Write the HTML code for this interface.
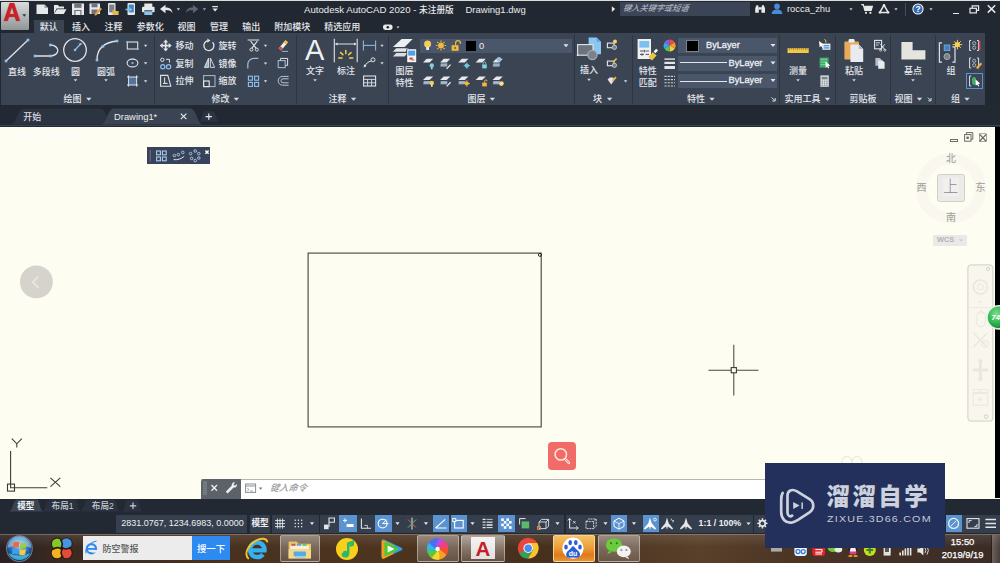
<!DOCTYPE html>
<html lang="zh-CN"><head><meta charset="utf-8"><title>Autodesk AutoCAD 2020 - Drawing1.dwg</title>
<style>
html,body{margin:0;padding:0;background:#222831;}
body{width:1000px;height:563px;overflow:hidden;position:relative;font-family:"Liberation Sans","Noto Sans CJK SC",sans-serif;}
#app{position:absolute;left:0;top:0;width:1000px;height:563px;overflow:hidden;background:#fefdf2;}
.r{position:absolute;box-sizing:border-box;}
.t{position:absolute;white-space:nowrap;line-height:1;font-family:"Liberation Sans","Noto Sans CJK SC",sans-serif;font-weight:500;}
svg.ov{position:absolute;left:0;top:0;}
svg text{font-family:"Liberation Sans","Noto Sans CJK SC",sans-serif;}
</style></head><body>
<div id="app">
<div class="r" style="left:0px;top:0px;width:1000px;height:33px;background:#222831;"></div>
<div class="r" style="left:0px;top:0px;width:1000px;height:1px;background:#dcdcd8;"></div>
<div class="r" style="left:1px;top:2px;width:28px;height:28px;background:linear-gradient(180deg,#d9dcdc 0%,#b9bdbd 45%,#8f9494 100%);border-radius:1px;"></div>
<div class="t" style="left:11.8px;top:13px;font-size:25.5px;color:#cf1f29;transform:translate(-50%,-50%);font-weight:bold;transform:translate(-50%,-50%) scaleX(0.92);text-shadow:0 0 1px #8d1218;">A</div>
<div class="t" style="left:304px;top:9.5px;font-size:9.65px;color:#e9ebee;transform:translate(0,-50%);">Autodesk AutoCAD 2020 - <span style="font-size:8.7px">未注册版</span></div>
<div class="t" style="left:465.5px;top:9.5px;font-size:9.5px;color:#e9ebee;transform:translate(0,-50%);">Drawing1.dwg</div>
<div class="r" style="left:620px;top:1.5px;width:130px;height:14.5px;background:#3b4557;"></div>
<div class="t" style="left:622.5px;top:9px;font-size:8.2px;color:#aeb4bf;transform:translate(0,-50%);font-style:italic;transform:translate(0,-50%) skewX(-10deg);">键入关键字或短语</div>
<div class="t" style="left:787px;top:9.3px;font-size:9.4px;color:#e9ebee;transform:translate(0,-50%);">rocca_zhu</div>
<div class="r" style="left:905.3px;top:3px;width:1px;height:13px;background:#454d5a;"></div>
<div class="r" style="left:952.5px;top:12.6px;width:6px;height:1.5px;background:#e6e8ea;"></div>
<div class="r" style="left:34px;top:20px;width:30px;height:13px;background:#3b4453;"></div>
<div class="t" style="left:48.7px;top:27px;font-size:9px;color:#e4e7ec;transform:translate(-50%,-50%);">默认</div>
<div class="t" style="left:81px;top:27px;font-size:9px;color:#e4e7ec;transform:translate(-50%,-50%);">插入</div>
<div class="t" style="left:113.4px;top:27px;font-size:9px;color:#e4e7ec;transform:translate(-50%,-50%);">注释</div>
<div class="t" style="left:150.3px;top:27px;font-size:9px;color:#e4e7ec;transform:translate(-50%,-50%);">参数化</div>
<div class="t" style="left:186.6px;top:27px;font-size:9px;color:#e4e7ec;transform:translate(-50%,-50%);">视图</div>
<div class="t" style="left:219px;top:27px;font-size:9px;color:#e4e7ec;transform:translate(-50%,-50%);">管理</div>
<div class="t" style="left:251.3px;top:27px;font-size:9px;color:#e4e7ec;transform:translate(-50%,-50%);">输出</div>
<div class="t" style="left:292.2px;top:27px;font-size:9px;color:#e4e7ec;transform:translate(-50%,-50%);">附加模块</div>
<div class="t" style="left:342.2px;top:27px;font-size:9px;color:#e4e7ec;transform:translate(-50%,-50%);">精选应用</div>
<div class="r" style="left:0px;top:33px;width:1000px;height:72px;background:#222831;"></div>
<div class="r" style="left:1px;top:33px;width:984px;height:72px;background:#3b4453;"></div>
<div class="r" style="left:154.0px;top:35px;width:1.2px;height:69px;background:#2d3541;"></div>
<div class="r" style="left:296.0px;top:35px;width:1.2px;height:69px;background:#2d3541;"></div>
<div class="r" style="left:387.5px;top:35px;width:1.2px;height:69px;background:#2d3541;"></div>
<div class="r" style="left:573.9px;top:35px;width:1.2px;height:69px;background:#2d3541;"></div>
<div class="r" style="left:631.5px;top:35px;width:1.2px;height:69px;background:#2d3541;"></div>
<div class="r" style="left:778.8px;top:35px;width:1.2px;height:69px;background:#2d3541;"></div>
<div class="r" style="left:835.0px;top:35px;width:1.2px;height:69px;background:#2d3541;"></div>
<div class="r" style="left:890.0px;top:35px;width:1.2px;height:69px;background:#2d3541;"></div>
<div class="r" style="left:934.5px;top:35px;width:1.2px;height:69px;background:#2d3541;"></div>
<div class="t" style="left:17px;top:71.6px;font-size:9px;color:#e4e7ec;transform:translate(-50%,-50%);">直线</div>
<div class="t" style="left:46.3px;top:71.6px;font-size:9px;color:#e4e7ec;transform:translate(-50%,-50%);">多段线</div>
<div class="t" style="left:75.5px;top:71.6px;font-size:9px;color:#e4e7ec;transform:translate(-50%,-50%);">圆</div>
<div class="t" style="left:106px;top:71.6px;font-size:9px;color:#e4e7ec;transform:translate(-50%,-50%);">圆弧</div>
<div class="t" style="left:72.4px;top:99px;font-size:9px;color:#e4e7ec;transform:translate(-50%,-50%);">绘图</div>
<div class="t" style="left:175.4px;top:45.5px;font-size:9px;color:#e4e7ec;transform:translate(0,-50%);">移动</div>
<div class="t" style="left:175.4px;top:63.5px;font-size:9px;color:#e4e7ec;transform:translate(0,-50%);">复制</div>
<div class="t" style="left:175.4px;top:81.2px;font-size:9px;color:#e4e7ec;transform:translate(0,-50%);">拉伸</div>
<div class="t" style="left:218.6px;top:45.5px;font-size:9px;color:#e4e7ec;transform:translate(0,-50%);">旋转</div>
<div class="t" style="left:218.6px;top:63.5px;font-size:9px;color:#e4e7ec;transform:translate(0,-50%);">镜像</div>
<div class="t" style="left:218.6px;top:81.2px;font-size:9px;color:#e4e7ec;transform:translate(0,-50%);">缩放</div>
<div class="t" style="left:220.6px;top:99px;font-size:9px;color:#e4e7ec;transform:translate(-50%,-50%);">修改</div>
<div class="t" style="left:314.7px;top:50px;font-size:29px;color:#eef0f2;transform:translate(-50%,-50%);transform:translate(-50%,-50%) scaleX(1.0);">A</div>
<div class="t" style="left:315px;top:71.2px;font-size:9px;color:#e4e7ec;transform:translate(-50%,-50%);">文字</div>
<div class="t" style="left:346px;top:71.2px;font-size:9px;color:#e4e7ec;transform:translate(-50%,-50%);">标注</div>
<div class="t" style="left:337.6px;top:99px;font-size:9px;color:#e4e7ec;transform:translate(-50%,-50%);">注释</div>
<div class="t" style="left:404.4px;top:71.3px;font-size:9px;color:#e4e7ec;transform:translate(-50%,-50%);">图层</div>
<div class="t" style="left:404.4px;top:83.4px;font-size:9px;color:#e4e7ec;transform:translate(-50%,-50%);">特性</div>
<div class="r" style="left:420px;top:38.6px;width:152px;height:14.2px;background:#4a566a;"></div>
<div class="r" style="left:465.5px;top:41.3px;width:10.2px;height:9.6px;background:#000;"></div>
<div class="t" style="left:481.7px;top:45.7px;font-size:9.4px;color:#e9ebee;transform:translate(-50%,-50%);">0</div>
<div class="t" style="left:476.4px;top:99px;font-size:9px;color:#e4e7ec;transform:translate(-50%,-50%);">图层</div>
<div class="t" style="left:589px;top:70.4px;font-size:9px;color:#e4e7ec;transform:translate(-50%,-50%);">插入</div>
<div class="t" style="left:597.6px;top:99px;font-size:9px;color:#e4e7ec;transform:translate(-50%,-50%);">块</div>
<div class="t" style="left:647.7px;top:70.8px;font-size:9px;color:#e4e7ec;transform:translate(-50%,-50%);">特性</div>
<div class="t" style="left:647.7px;top:82.8px;font-size:9px;color:#e4e7ec;transform:translate(-50%,-50%);">匹配</div>
<div class="r" style="left:678px;top:38px;width:98.6px;height:15.2px;background:#4a566a;"></div>
<div class="r" style="left:678px;top:56.4px;width:98.6px;height:14.4px;background:#4a566a;"></div>
<div class="r" style="left:678px;top:73.5px;width:98.6px;height:14.5px;background:#4a566a;"></div>
<div class="r" style="left:686.2px;top:39.8px;width:12.6px;height:12px;background:#000;border:1px solid #7b7f88;"></div>
<div class="t" style="left:706px;top:46.2px;font-size:9.2px;color:#eef0f2;transform:translate(0,-50%);-webkit-text-stroke:.3px #eef0f2;">ByLayer</div>
<div class="r" style="left:680px;top:62.1px;width:46.6px;height:1.1px;background:#e3e5e8;"></div>
<div class="t" style="left:728.6px;top:63.8px;font-size:9.2px;color:#eef0f2;transform:translate(0,-50%);-webkit-text-stroke:.3px #eef0f2;">ByLayer</div>
<div class="r" style="left:680px;top:80.5px;width:46.6px;height:1.1px;background:#e3e5e8;"></div>
<div class="t" style="left:728.6px;top:81.4px;font-size:9.2px;color:#eef0f2;transform:translate(0,-50%);-webkit-text-stroke:.3px #eef0f2;">ByLayer</div>
<div class="t" style="left:696px;top:99px;font-size:9px;color:#e4e7ec;transform:translate(-50%,-50%);">特性</div>
<div class="t" style="left:798px;top:71px;font-size:9px;color:#e4e7ec;transform:translate(-50%,-50%);">测量</div>
<div class="t" style="left:802.4px;top:99px;font-size:9px;color:#e4e7ec;transform:translate(-50%,-50%);">实用工具</div>
<div class="t" style="left:854px;top:71px;font-size:9px;color:#e4e7ec;transform:translate(-50%,-50%);">粘贴</div>
<div class="t" style="left:863px;top:99px;font-size:9px;color:#e4e7ec;transform:translate(-50%,-50%);">剪贴板</div>
<div class="t" style="left:913px;top:71px;font-size:9px;color:#e4e7ec;transform:translate(-50%,-50%);">基点</div>
<div class="t" style="left:903.4px;top:99px;font-size:9px;color:#e4e7ec;transform:translate(-50%,-50%);">视图</div>
<div class="t" style="left:951px;top:71px;font-size:9px;color:#e4e7ec;transform:translate(-50%,-50%);">组</div>
<div class="r" style="left:965.6px;top:72.6px;width:17.4px;height:16.4px;background:transparent;border:1px solid #5b93d1;"></div>
<div class="t" style="left:955.5px;top:99px;font-size:9px;color:#e4e7ec;transform:translate(-50%,-50%);">组</div>
<div class="r" style="left:0px;top:105px;width:1000px;height:21.5px;background:#222933;"></div>
<svg class="ov" width="1000" height="563" viewBox="0 0 1000 563"><path d="M11 124.4C17 124 17 109 24 108.6H100C107 109 107 124 113 124.4z" fill="#2d3441"/></svg>
<svg class="ov" width="1000" height="563" viewBox="0 0 1000 563"><path d="M101 124.4C107 124 107 108.6 114 108.4H190C197 108.6 197 124 203 124.4z" fill="#3b4453"/></svg>
<svg class="ov" width="1000" height="563" viewBox="0 0 1000 563"><path d="M199.5 121.5C202 121 202 111.5 205 111.2H212C216 111.5 217.5 121 217.5 121.5z" fill="#2d3441"/></svg>
<div class="t" style="left:32.2px;top:116.8px;font-size:9px;color:#d9dde3;transform:translate(-50%,-50%);">开始</div>
<div class="t" style="left:114px;top:116.6px;font-size:9.4px;color:#eceef1;transform:translate(0,-50%);">Drawing1*</div>
<div class="r" style="left:0px;top:124.7px;width:1000px;height:1.1px;background:#3b4453;"></div>
<div class="r" style="left:0px;top:127.3px;width:995.2px;height:371.2px;background:#fefdf2;"></div>
<div class="r" style="left:995.2px;top:127.3px;width:4.8px;height:371.2px;background:#000;"></div>
<div class="t" style="left:8px;top:136.2px;font-size:8.6px;color:#ffffff;transform:translate(0,-50%);opacity:.85;">[-][俯视][二维线框]</div>
<div class="r" style="left:146.8px;top:147.2px;width:62.8px;height:17.2px;background:#384359;"></div>
<div class="r" style="left:548.3px;top:442px;width:27.7px;height:27.6px;background:#f16b69;border-radius:4px;"></div>
<div class="r" style="left:949.6px;top:138.6px;width:8.4px;height:3px;background:transparent;border:1px solid #6a6a66;"></div>
<svg class="ov" width="1000" height="563" viewBox="0 0 1000 563"><circle cx="951" cy="188.4" r="29.5" fill="none" stroke="#faf8ee" stroke-width="11"/></svg>
<div class="t" style="left:951px;top:159.3px;font-size:10px;color:#a9a9a4;transform:translate(-50%,-50%);">北</div>
<div class="t" style="left:951px;top:218px;font-size:10px;color:#a9a9a4;transform:translate(-50%,-50%);">南</div>
<div class="t" style="left:921.6px;top:188.3px;font-size:10px;color:#a9a9a4;transform:translate(-50%,-50%);">西</div>
<div class="t" style="left:980.6px;top:188.3px;font-size:10px;color:#a9a9a4;transform:translate(-50%,-50%);">东</div>
<div class="r" style="left:936.8px;top:174.2px;width:28px;height:27.8px;background:#ecebe8;border:1.2px solid #d3cfc4;border-radius:2.5px;"></div>
<div class="r" style="left:942.6px;top:178.4px;width:16.6px;height:18px;background:#f1f0ee;"></div>
<div class="t" style="left:950.8px;top:187.2px;font-size:15.4px;color:#8d8d90;transform:translate(-50%,-50%);font-weight:300;">上</div>
<div class="r" style="left:933.4px;top:234.8px;width:33.6px;height:10.8px;background:#eae9e5;border-radius:1px;"></div>
<div class="t" style="left:945.6px;top:240.3px;font-size:7.4px;color:#b4b4b8;transform:translate(-50%,-50%);font-weight:bold;">WCS</div>
<div class="r" style="left:201px;top:479px;width:564.6px;height:19.5px;background:#ffffff;border-top:1px solid #b5b5b2;"></div>
<div class="r" style="left:201px;top:479px;width:40.2px;height:19.5px;background:#5d6168;border-radius:3px 0 0 0;"></div>
<div class="t" style="left:270.4px;top:488.6px;font-size:9.2px;color:#9a9a9a;transform:translate(0,-50%);font-style:italic;transform:translate(0,-50%) skewX(-10deg);">键入命令</div>
<div class="r" style="left:0px;top:498.5px;width:1000px;height:16.5px;background:#222933;"></div>
<svg class="ov" width="1000" height="563" viewBox="0 0 1000 563"><path d="M9 511.400C13 511 13 499.800 17 499.400h20c3 .400 3 11.600 6 12z" fill="#3b4453"/></svg>
<svg class="ov" width="1000" height="563" viewBox="0 0 1000 563"><path d="M42 511.400C46 511 46 499.800 50 499.400h25c3 .400 3 11.600 6 12z" fill="#2b323f"/></svg>
<svg class="ov" width="1000" height="563" viewBox="0 0 1000 563"><path d="M80 511.400C84 511 84 499.800 88 499.400h26c3 .400 3 11.600 6 12z" fill="#2b323f"/></svg>
<svg class="ov" width="1000" height="563" viewBox="0 0 1000 563"><path d="M122 511.400C125 511 125 499.800 128 499.400h9c3 .400 3 11.600 5 12z" fill="#2b323f"/></svg>
<div class="t" style="left:25.8px;top:505.8px;font-size:8.6px;color:#eef0f2;transform:translate(-50%,-50%);font-weight:bold;">模型</div>
<div class="t" style="left:62.6px;top:505.8px;font-size:8.6px;color:#c9ced6;transform:translate(-50%,-50%);">布局1</div>
<div class="t" style="left:102.8px;top:505.8px;font-size:8.6px;color:#c9ced6;transform:translate(-50%,-50%);">布局2</div>
<div class="r" style="left:0px;top:515px;width:1000px;height:18.5px;background:#222933;"></div>
<div class="r" style="left:116px;top:515px;width:131px;height:17.5px;background:#363f4e;"></div>
<div class="t" style="left:121.2px;top:523.4px;font-size:9.0px;color:#eef0f2;transform:translate(0,-50%);">2831.0767, 1234.6983, 0.0000</div>
<div class="r" style="left:249.5px;top:515px;width:20.6px;height:17.5px;background:#363f4e;"></div>
<div class="t" style="left:260px;top:523.4px;font-size:8.6px;color:#eef0f2;transform:translate(-50%,-50%);font-weight:bold;">模型</div>
<div class="r" style="left:271.6px;top:515px;width:47px;height:17.5px;background:#353e4d;"></div>
<div class="r" style="left:320px;top:515px;width:449px;height:17.5px;background:#353e4d;"></div>
<div class="r" style="left:339px;top:515.4px;width:17.5px;height:16.3px;background:#5b93d1;"></div>
<div class="r" style="left:375px;top:515.4px;width:16.5px;height:16.3px;background:#5b93d1;"></div>
<div class="r" style="left:432.5px;top:515.4px;width:16.5px;height:16.3px;background:#5b93d1;"></div>
<div class="r" style="left:450.5px;top:515.4px;width:16.0px;height:16.3px;background:#5b93d1;"></div>
<div class="r" style="left:498px;top:515.4px;width:16.5px;height:16.3px;background:#5b93d1;"></div>
<div class="r" style="left:611px;top:515.4px;width:16px;height:16.3px;background:#5b93d1;"></div>
<div class="r" style="left:642.5px;top:515.4px;width:16.5px;height:16.3px;background:#5b93d1;"></div>
<div class="t" style="left:698.6px;top:523.4px;font-size:8.8px;color:#eef0f2;transform:translate(0,-50%);font-weight:bold;">1:1 / 100%</div>
<div class="r" style="left:564.4px;top:515px;width:1.6px;height:17.5px;background:#222933;"></div>
<div class="r" style="left:752.6px;top:515px;width:1.8px;height:17.5px;background:#222933;"></div>
<div class="r" style="left:945.5px;top:515px;width:54.5px;height:17.5px;background:#353e4d;"></div>
<div class="r" style="left:945.5px;top:515.4px;width:16.5px;height:16.3px;background:#5b93d1;"></div>
<div class="r" style="left:0px;top:533.5px;width:1000px;height:29.5px;background:linear-gradient(90deg,#2a2024 0%,#3a2a20 6%,#46301f 20%,#4d341f 38%,#46301e 55%,#59402a 70%,#4a3424 80%,#3a2c26 100%);"></div>
<div class="r" style="left:0px;top:533.5px;width:1000px;height:1px;background:rgba(200,185,170,.45);"></div>
<div class="r" style="left:0px;top:534.5px;width:1000px;height:12px;background:linear-gradient(180deg,rgba(255,255,255,.10),rgba(255,255,255,0));"></div>
<div class="r" style="left:83.4px;top:536px;width:108.8px;height:24.4px;background:#ececec;"></div>
<div class="r" style="left:192px;top:536px;width:38.2px;height:24.4px;background:#2d8af1;"></div>
<div class="t" style="left:102.6px;top:548.8px;font-size:9px;color:#555;transform:translate(0,-50%);">防空警报</div>
<div class="t" style="left:211px;top:548.8px;font-size:9.4px;color:#fff;transform:translate(-50%,-50%);">搜一下</div>
<div class="r" style="left:280px;top:534.6px;width:39.60000000000002px;height:27px;background:linear-gradient(180deg,rgba(255,255,255,.36),rgba(255,255,255,.16));border:1px solid rgba(255,255,255,.38);border-radius:2px;"></div>
<div class="r" style="left:417px;top:534.6px;width:41.80000000000001px;height:27px;background:linear-gradient(180deg,rgba(255,255,255,.36),rgba(255,255,255,.16));border:1px solid rgba(255,255,255,.38);border-radius:2px;"></div>
<div class="r" style="left:461px;top:534.6px;width:43.60000000000002px;height:27px;background:linear-gradient(180deg,rgba(255,255,255,.52),rgba(255,255,255,.16));border:1px solid rgba(255,255,255,.38);border-radius:2px;"></div>
<div class="r" style="left:552.6px;top:534.6px;width:42.39999999999998px;height:27px;background:linear-gradient(180deg,rgba(255,190,80,.75),rgba(255,255,255,.16));border:1px solid rgba(255,255,255,.38);border-radius:2px;background:linear-gradient(180deg,#f3c264,#ea9c34 50%,#de7a1c 75%,#e99236);border-color:rgba(255,225,170,.8);"></div>
<div class="r" style="left:598px;top:534.6px;width:42px;height:27px;background:linear-gradient(180deg,rgba(255,255,255,.36),rgba(255,255,255,.16));border:1px solid rgba(255,255,255,.38);border-radius:2px;"></div>
<div class="r" style="left:471.2px;top:536.6px;width:23.6px;height:22.8px;background:linear-gradient(180deg,#f6f4f2,#e2e0de);"></div>
<div class="t" style="left:483px;top:548.6px;font-size:20.5px;color:#c4202a;transform:translate(-50%,-50%);font-weight:bold;">A</div>
<svg class="ov" width="1000" height="563" viewBox="0 0 1000 563"><rect x="771" y="546" width="11" height="5.600" fill="#a9a9a9"/><rect x="794.400" y="543.600" width="12.400" height="12.400" rx="2.400" fill="#eef4fb"/><circle cx="798" cy="551.600" r="2" fill="none" stroke="#2d7ae0" stroke-width="1.200"/><circle cx="803.200" cy="551.600" r="2" fill="none" stroke="#2d7ae0" stroke-width="1.200"/><rect x="812.400" y="543.600" width="12.600" height="12.400" rx="2.400" fill="#dc242c"/><path d="M815.400 549.600h6.600v2.600h-6.600M815.400 554h6.600" stroke="#fff" stroke-width="1" fill="none"/><ellipse cx="833" cy="547.600" rx="5.400" ry="4.400" fill="#6cc83a"/><ellipse cx="838.400" cy="549.600" rx="3.800" ry="3" fill="#e6efe0"/><ellipse cx="853" cy="549" rx="4.600" ry="5.800" fill="#2a2024"/><ellipse cx="853" cy="550.600" rx="3" ry="3.400" fill="#f6f6f6"/><path d="M849 551.600h8l-1.400 3h-5.200z" fill="#e03a8a"/><ellipse cx="850.400" cy="556" rx="2.200" ry="1" fill="#f0a020"/><ellipse cx="855.600" cy="556" rx="2.200" ry="1" fill="#f0a020"/><circle cx="869.800" cy="550" r="6" fill="#c8dc20"/><path d="M866.400 550h6.800M869.800 546.600v6.800" stroke="#2a8a2a" stroke-width="2"/><rect x="883.600" y="545.600" width="7" height="10" fill="#e0e0e0"/><rect x="885" y="547" width="4.200" height="5" fill="#555"/><path d="M889.600 553v-6l2.400-1.400" stroke="#f4f4f4" stroke-width="1.200" fill="none"/><path d="M900.200 555.600v-3M902.800 555.600v-5M905.400 555.600v-7M908 555.600v-9M910.600 555.600v-11" stroke="#e6e6e6" stroke-width="1.600"/><path d="M917.400 548.400h2.600l3.400-3v10.200l-3.400-3h-2.600z" fill="#e6e6e6"/><path d="M925 548q1.800 2.400 0 5M927 546.400q2.800 4 0 8.200" fill="none" stroke="#e6e6e6" stroke-width=".900"/></svg>
<div class="t" style="left:962.6px;top:542.1px;font-size:9.4px;color:#fff;transform:translate(-50%,-50%);-webkit-text-stroke:.25px #fff;">15:50</div>
<div class="t" style="left:962.6px;top:555.1px;font-size:9.4px;color:#fff;transform:translate(-50%,-50%);-webkit-text-stroke:.25px #fff;">2019/9/19</div>
<div class="r" style="left:990.5px;top:534.5px;width:9.5px;height:28.5px;background:linear-gradient(90deg,rgba(255,255,255,.25),rgba(255,255,255,.08));border-left:1px solid rgba(0,0,0,.5);"></div>
<div class="r" style="left:765.2px;top:463px;width:179.4px;height:84.9px;background:#23305b;"></div>
<div class="t" style="left:826.6px;top:498.3px;font-size:23.4px;color:#cdd1dc;transform:translate(0,-50%);font-weight:900;letter-spacing:2.500px;">溜溜自学</div>
<div class="t" style="left:826.7px;top:519px;font-size:9px;color:#c5c9d5;transform:translate(0,-50%);font-weight:400;letter-spacing:1px;transform:translate(0,-50%) scaleX(1.190);transform-origin:0 50%;">ZIXUE.3D66.COM</div>
<svg class="ov" width="1000" height="563" viewBox="0 0 1000 563">
<path d="M22.3 14.25h4l-2.0 2.5z" fill="#333"/>
<path d="M36.5 4.5h8l3.5 3.5v6h-11.5z" fill="#e6e8ea"/><path d="M44.5 4.5v3.5h3.5" fill="#9aa0a8"/>
<path d="M54 5h4l1 1.5h5v2h-7.5l-2.5 5.5z" fill="#e6e8ea"/><path d="M57 9.3h9.5l-2.7 4.7h-9.6z" fill="#e6e8ea"/>
<rect x="72" y="3.5" width="12" height="11.5" fill="#e6e8ea"/><rect x="74.3" y="3.5" width="7.2" height="4.3" fill="#6c737e"/><rect x="74.3" y="10" width="7.2" height="5" fill="#6c737e"/><rect x="75.5" y="11" width="4.8" height="4" fill="#e6e8ea"/>
<rect x="89.5" y="3.5" width="10.5" height="10.5" fill="#e6e8ea"/><rect x="91.5" y="3.5" width="6" height="3.8" fill="#6c737e"/><rect x="91.5" y="9.5" width="6" height="4.5" fill="#6c737e"/><path d="M95 13.5l5.2-6 1.8 1.6-5.2 6-2.3.6z" fill="#e8a33d"/>
<rect x="108" y="3" width="7.5" height="12" rx="1" fill="#e6e8ea"/><rect x="109.2" y="4.6" width="5.1" height="7.8" fill="#7b828c"/><path d="M112.5 10h2.5l.6 1h3v4h-6.1z" fill="#e8b64c"/>
<rect x="127.5" y="3" width="7.5" height="12" rx="1" fill="#e6e8ea"/><rect x="128.7" y="4.6" width="5.1" height="7.8" fill="#3f86c9"/><path d="M125.5 8.7h4v-1.6l2.6 2.4-2.6 2.4v-1.6h-4z" fill="#7fc0f0"/>
<rect x="144.3" y="3.5" width="8" height="3.5" fill="#e6e8ea"/><rect x="142" y="6.8" width="12.6" height="5.5" rx="1" fill="#e6e8ea"/><rect x="144.3" y="10.3" width="8" height="4.7" fill="#8fc4ee"/><rect x="144.3" y="10.3" width="8" height="1" fill="#3f4753"/>
<path d="M160 9l5.5-4.2v2.6c4 0 6.6 1.6 7 5.6-1.6-2.3-3.6-2.9-7-2.9v3.1z" fill="#e6e8ea"/>
<path d="M176.70000000000002 8.200000000000001h3.4l-1.7 2.2z" fill="#c9ccd2"/>
<path d="M198.4 9l-5.5-4.2v2.6c-4 0-6.6 1.6-7 5.6 1.6-2.3 3.6-2.9 7-2.9v3.1z" fill="#5d6572"/>
<path d="M202.70000000000002 8.200000000000001h3.4l-1.7 2.2z" fill="#9aa0a8"/>
<rect x="212.2" y="6" width="5.8" height="1.2" fill="#e6e8ea"/>
<path d="M212.4 8.5h5.4l-2.7 3z" fill="#e6e8ea"/>
<path d="M611.8 6.3l3.4 2.8-3.4 2.8z" fill="#e6e8ea"/>
<path d="M755.2 12.8v-4.6l1.2-3h1.8l.6 3v4.6zM761.4 12.8v-4.6l.6-3h1.8l1.2 3v4.6z" fill="#e6e8ea"/><rect x="758.6" y="7.2" width="3" height="2.4" fill="#e6e8ea"/>
<circle cx="777" cy="6.4" r="2.8" fill="#4a8bd9"/><path d="M771.6 14c.4-3.6 2.6-4.6 5.4-4.6s5 1 5.4 4.6z" fill="#4a8bd9"/>
<path d="M849.4 8.200000000000001h3.2l-1.6 2.2z" fill="#c9ccd2"/>
<path d="M861.3 4.6h2l1.6 5.8h6.2l1.2-4h-7.6" fill="#e6e8ea" stroke="#e6e8ea" stroke-width="1.3"/><circle cx="866" cy="12.8" r="1.1" fill="#e6e8ea"/><circle cx="870.4" cy="12.8" r="1.1" fill="#e6e8ea"/>
<path d="M884 5.2l4.2 7.2h-8.4z" fill="none" stroke="#e6e8ea" stroke-width="1.5" stroke-linejoin="round"/><circle cx="884" cy="5.2" r="1.2" fill="#e6e8ea"/><circle cx="879.8" cy="12.4" r="1.2" fill="#e6e8ea"/><circle cx="888.2" cy="12.4" r="1.2" fill="#e6e8ea"/>
<path d="M894.4 8.200000000000001h3.2l-1.6 2.2z" fill="#c9ccd2"/>
<circle cx="918" cy="9" r="5.6" fill="#fff"/><circle cx="918" cy="9" r="4.6" fill="#3467b5"/>
<text x="918" y="12.1" font-size="8.5" font-weight="bold" fill="#fff" text-anchor="middle">?</text>
<path d="M929.4 8.200000000000001h3.2l-1.6 2.2z" fill="#c9ccd2"/>
<rect x="970" y="8.3" width="6.4" height="4.6" fill="none" stroke="#e6e8ea" stroke-width="1.2"/><path d="M972.2 8v-2.2h6.4v4.6h-2" fill="none" stroke="#e6e8ea" stroke-width="1.2"/>
<path d="M987.8 5.2l7.4 7.4M995.2 5.2l-7.4 7.4" stroke="#e6e8ea" stroke-width="1.5"/>
<rect x="383" y="24.4" width="9.6" height="5.6" rx="2.4" fill="#e6e8ea"/><circle cx="387.8" cy="27.2" r="1.3" fill="#222831"/>
<path d="M396.5 26.4h3l-1.5 2z" fill="#c9ccd2"/>
<path d="M6 61L28 40" stroke="#dfe2e7" stroke-width="1.3"/>
<rect x="4.7" y="59.7" width="2.6" height="2.6" fill="#8fc0ee"/>
<rect x="26.7" y="38.7" width="2.6" height="2.6" fill="#8fc0ee"/>
<path d="M35 56H50.4A7.4 5.5 0 0 0 50.4 45" fill="none" stroke="#dfe2e7" stroke-width="1.3"/>
<rect x="33.7" y="54.7" width="2.6" height="2.6" fill="#8fc0ee"/>
<rect x="49.1" y="54.7" width="2.6" height="2.6" fill="#8fc0ee"/>
<rect x="49.1" y="43.7" width="2.6" height="2.6" fill="#8fc0ee"/>
<circle cx="75" cy="50" r="11.3" fill="none" stroke="#dfe2e7" stroke-width="1.3"/><path d="M75 50l5.5-6" stroke="#8fc0ee" stroke-width="1.2"/>
<rect x="73.9" y="48.9" width="2.2" height="2.2" fill="#8fc0ee"/>
<rect x="79.4" y="42.9" width="2.2" height="2.2" fill="#8fc0ee"/>
<path d="M97 60Q97 43 117 41" fill="none" stroke="#dfe2e7" stroke-width="1.3"/>
<rect x="95.7" y="58.7" width="2.6" height="2.6" fill="#8fc0ee"/>
<rect x="101.7" y="45.1" width="2.6" height="2.6" fill="#8fc0ee"/>
<rect x="115.7" y="39.7" width="2.6" height="2.6" fill="#8fc0ee"/>
<path d="M73.7 79.14999999999999h3.6l-1.8 2.3z" fill="#d5d9e0"/>
<path d="M104.2 79.14999999999999h3.6l-1.8 2.3z" fill="#d5d9e0"/>
<rect x="127.3" y="42" width="10.4" height="7" fill="none" stroke="#dfe2e7" stroke-width="1.1"/>
<rect x="126.39999999999999" y="41.1" width="1.8" height="1.8" fill="#8fc0ee"/>
<rect x="136.79999999999998" y="48.1" width="1.8" height="1.8" fill="#8fc0ee"/>
<ellipse cx="132.5" cy="63" rx="5.4" ry="3.9" fill="none" stroke="#dfe2e7" stroke-width="1.1"/>
<rect x="131.6" y="62.1" width="1.8" height="1.8" fill="#8fc0ee"/>
<rect x="131.7" y="58.300000000000004" width="1.6" height="1.6" fill="#8fc0ee"/>
<rect x="128.6" y="77" width="8" height="8" fill="#52739f"/><path d="M127 77h11.2M127 85h11.2M128.6 75.4v11.2M136.6 75.4v11.2" stroke="#dfe2e7" stroke-width="1"/>
<path d="M143.9 44.699999999999996h3.4l-1.7 2.2z" fill="#d5d9e0"/>
<path d="M143.9 62.199999999999996h3.4l-1.7 2.2z" fill="#d5d9e0"/>
<path d="M143.9 80.2h3.4l-1.7 2.2z" fill="#d5d9e0"/>
<path d="M86.1 97.75h5.4l-2.7 3.1z" fill="#d5d9e0"/>
<path d="M165.7 39.6l2.6 3h-1.8v2.2h2.2v-1.8l3 2.6-3 2.6v-1.8h-2.2v2.2h1.8l-2.6 3-2.6-3h1.8v-2.2h-2.2v1.8l-3-2.6 3-2.6v1.8h2.2v-2.2h-1.8z" fill="#dfe2e7"/>
<circle cx="162.3" cy="59.8" r="1.7" fill="none" stroke="#dfe2e7" stroke-width="1"/><path d="M166 59.3h3.4v3.4" fill="none" stroke="#dfe2e7" stroke-width="1"/><circle cx="162.8" cy="66.7" r="2.1" fill="none" stroke="#8fc0ee" stroke-width="1.2"/><circle cx="168.6" cy="66.7" r="2.1" fill="none" stroke="#8fc0ee" stroke-width="1.2"/>
<path d="M160.6 75.4h7.2l3 10.8h-10.2z" fill="none" stroke="#dfe2e7" stroke-width="1.1"/><path d="M164.6 77.4v5.6" stroke="#dfe2e7" stroke-width="1"/><path d="M163 83.4h4.6" stroke="#dfe2e7" stroke-width="1.1"/>
<path d="M212.6 42.2a5 5 0 1 1-4.4-1.6" fill="none" stroke="#dfe2e7" stroke-width="1.3"/><path d="M207.4 38.6l3 2-3 2.2z" fill="#dfe2e7"/>
<path d="M208.6 58l-4.2 9.4h4.2z" fill="#9fb3c8" stroke="#dfe2e7" stroke-width="0.9"/><path d="M210.4 58l4.2 9.4h-4.2z" fill="none" stroke="#dfe2e7" stroke-width="0.9"/>
<rect x="203.6" y="75.6" width="11.4" height="11" fill="none" stroke="#aebdce" stroke-width="1"/><rect x="203.6" y="81" width="5.6" height="5.6" fill="none" stroke="#dfe2e7" stroke-width="1.2"/>
<path d="M247.6 40h11.6" stroke="#dfe2e7" stroke-width="1"/><path d="M250.6 41l5.6 7.4M257.4 41l-5.6 7.4" stroke="#dfe2e7" stroke-width="1.2"/><circle cx="251.4" cy="49.6" r="1.5" fill="none" stroke="#dfe2e7" stroke-width="1"/><circle cx="256.8" cy="49.6" r="1.5" fill="none" stroke="#dfe2e7" stroke-width="1"/>
<path d="M247.8 68.6v-4.2a6 6 0 0 1 6-6h4.6" fill="none" stroke="#9bb8d8" stroke-width="1.3"/>
<rect x="248.4" y="76.2" width="4" height="4" fill="none" stroke="#8fc0ee" stroke-width="1.1"/>
<rect x="254.6" y="76.2" width="4" height="4" fill="none" stroke="#8fc0ee" stroke-width="1.1"/>
<rect x="248.4" y="82.4" width="4" height="4" fill="none" stroke="#8fc0ee" stroke-width="1.1"/>
<rect x="254.6" y="82.4" width="4" height="4" fill="none" stroke="#8fc0ee" stroke-width="1.1"/>
<path d="M263.8 44.699999999999996h3.4l-1.7 2.2z" fill="#d5d9e0"/>
<path d="M263.8 62.5h3.4l-1.7 2.2z" fill="#d5d9e0"/>
<path d="M263.8 80.30000000000001h3.4l-1.7 2.2z" fill="#d5d9e0"/>
<path d="M278.6 48.4l6.6-8 2.6 2-6.6 8z" fill="#f3efe6"/><path d="M283.6 42.4l1.8-2.4 2.6 2-1.8 2.4z" fill="#f0c040"/><path d="M278.6 48.4l1.8-2.2 2.6 2-1.8 2.4z" fill="#d84a4a"/><path d="M282 51.4h6" stroke="#7fb8e6" stroke-width="1"/>
<rect x="278.2" y="60.6" width="7" height="7" fill="none" stroke="#9bb8d8" stroke-width="1.1"/><path d="M280.4 60.4v-2h7.2v7h-2" fill="none" stroke="#dfe2e7" stroke-width="1"/>
<path d="M288.6 76.4h-6a4.4 4.4 0 0 0 0 8.8h6M288.6 78.8h-5.6a2 2 0 0 0 0 4h5.6" fill="none" stroke="#b5c6d8" stroke-width="1"/>
<path d="M233.70000000000002 97.75h5.4l-2.7 3.1z" fill="#d5d9e0"/>
<path d="M313.2 79.14999999999999h3.6l-1.8 2.3z" fill="#d5d9e0"/>
<path d="M334.3 38.8v23.4M357.2 38.8v23.4" stroke="#dfe2e7" stroke-width="1.1"/><path d="M335.6 44h20.4" stroke="#dfe2e7" stroke-width="1"/><path d="M335 44l2.6-1.4v2.8zM356.6 44l-2.6-1.4v2.8z" fill="#dfe2e7"/>
<path d="M345.8 50.6v3M340.6 52.6l2.4 2.2M351 52.6l-2.4 2.2M338.8 58h3.2M352.8 58h-3.2" stroke="#f2cf4a" stroke-width="1.5" stroke-linecap="round"/>
<path d="M363.4 40.4v10M375.6 40.4v10" stroke="#8fb4da" stroke-width="1.1"/><path d="M363.4 45.4h12.2" stroke="#8fb4da" stroke-width="1.1"/>
<circle cx="373" cy="59.8" r="2" fill="none" stroke="#dfe2e7" stroke-width="1"/><path d="M371.4 61c-3.4.6-5.6 2.6-6.4 5.6" fill="none" stroke="#dfe2e7" stroke-width="1"/><path d="M363.6 67.6l.6-3.4 2.4 1.8z" fill="#dfe2e7"/>
<rect x="363.6" y="76" width="12" height="10" fill="none" stroke="#dfe2e7" stroke-width="1.1"/><path d="M363.6 79.4h12M363.6 82.8h12M367.6 79.4v6.6M371.6 79.4v6.6" stroke="#dfe2e7" stroke-width="0.9"/>
<path d="M380.3 44.699999999999996h3.4l-1.7 2.2z" fill="#d5d9e0"/>
<path d="M380.3 62.3h3.4l-1.7 2.2z" fill="#d5d9e0"/>
<path d="M350.90000000000003 97.75h5.4l-2.7 3.1z" fill="#d5d9e0"/>
<path d="M392.9 47L401.6 39H412.7L404.7 47z" fill="#eceef0"/><path d="M392.9 51.8l3.400-3.600h12.600l-3.400 3.600z" fill="#e3e6ea"/><path d="M392.9 56.6l3.400-3.600h11.600l-3.400 3.600z" fill="#dadde2"/>
<rect x="406.4" y="48.6" width="10.2" height="14" fill="#3b4453"/><rect x="407.2" y="49.2" width="9" height="13" fill="#f4f5f6"/><rect x="408.2" y="50.6" width="7" height="5" fill="#4fa0e6"/><rect x="409.4" y="57.6" width="3.400" height="2" fill="#d0403c"/><rect x="411.400" y="59.200" width="3" height="1.400" fill="#e07a70"/>
<circle cx="427.6" cy="44" r="3.5" fill="#f6cf55"/><rect x="426.2" y="47" width="2.8" height="3" fill="#e9ebee"/>
<circle cx="441" cy="45.5" r="2.9" fill="#f3b93a"/><path d="M441 40.4v1.6M441 49v1.6M435.9 45.5h1.6M444.5 45.5h1.6M437.4 41.9l1.1 1.1M443.5 48l1.1 1.1M437.4 49.1l1.1-1.1M443.5 43l1.1-1.1" stroke="#f3b93a" stroke-width="1.1"/>
<rect x="451.6" y="45.2" width="7" height="5.6" fill="#f0b840"/><path d="M455.6 45.2v-2.2a2.4 2.4 0 0 1 4.8 0v1" fill="none" stroke="#f0b840" stroke-width="1.2"/><rect x="454.4" y="47" width="1.4" height="2" fill="#7a5a10"/>
<path d="M563.5 44.3h5l-2.5 3z" fill="#e4e7ec"/>
<path d="M423.0 62.4l3.6-3.6h6.6l-3.6 3.6z" fill="#e6e8eb"/>
<path d="M423.0 80.0l3.6-3.6h6.6l-3.6 3.6z" fill="#e6e8eb"/>
<path d="M423.0 82.19999999999999l1-1h6.6l-1 1zM423.0 84.19999999999999l1-1h6.6l-1 1z" fill="#a9cbe8"/><path d="M423.0 83.19999999999999l1-1h6.6l-1 1z" fill="#d0d4d9"/>
<path d="M440.1 62.4l3.6-3.6h6.6l-3.6 3.6z" fill="#e6e8eb"/>
<path d="M440.1 64.6l1-1h6.6l-1 1zM440.1 66.6l1-1h6.6l-1 1z" fill="#a9cbe8"/><path d="M440.1 65.6l1-1h6.6l-1 1z" fill="#d0d4d9"/>
<path d="M440.1 80.0l3.6-3.6h6.6l-3.6 3.6z" fill="#e6e8eb"/>
<path d="M440.1 82.19999999999999l1-1h6.6l-1 1zM440.1 84.19999999999999l1-1h6.6l-1 1z" fill="#a9cbe8"/><path d="M440.1 83.19999999999999l1-1h6.6l-1 1z" fill="#d0d4d9"/>
<path d="M458.20000000000005 62.4l3.6-3.6h6.6l-3.6 3.6z" fill="#e6e8eb"/>
<path d="M458.20000000000005 80.0l3.6-3.6h6.6l-3.6 3.6z" fill="#e6e8eb"/>
<path d="M458.20000000000005 82.19999999999999l1-1h6.6l-1 1zM458.20000000000005 84.19999999999999l1-1h6.6l-1 1z" fill="#a9cbe8"/><path d="M458.20000000000005 83.19999999999999l1-1h6.6l-1 1z" fill="#d0d4d9"/>
<path d="M475.6 62.4l3.6-3.6h6.6l-3.6 3.6z" fill="#e6e8eb"/>
<path d="M475.6 80.0l3.6-3.6h6.6l-3.6 3.6z" fill="#e6e8eb"/>
<path d="M492.6 62.4l3.6-3.6h6.6l-3.6 3.6z" fill="#e6e8eb"/>
<path d="M492.6 64.6l1-1h6.6l-1 1zM492.6 66.6l1-1h6.6l-1 1z" fill="#a9cbe8"/><path d="M492.6 65.6l1-1h6.6l-1 1z" fill="#d0d4d9"/>
<path d="M492.6 80.0l3.6-3.6h6.6l-3.6 3.6z" fill="#e6e8eb"/>
<path d="M492.6 82.19999999999999l1-1h6.6l-1 1zM492.6 84.19999999999999l1-1h6.6l-1 1z" fill="#a9cbe8"/><path d="M492.6 83.19999999999999l1-1h6.6l-1 1z" fill="#d0d4d9"/>
<circle cx="431.8" cy="65.4" r="2.2" fill="#7fd0d8"/><rect x="431" y="67.4" width="1.6" height="1.8" fill="#dfe2e6"/>
<path d="M446.6 68.8l4-4.2" stroke="#e6e8eb" stroke-width="1.3"/>
<circle cx="466.8" cy="65.6" r="2.2" fill="#6fc6d6"/><path d="M466.8 62.4v6.4M463.6 65.6h6.4" stroke="#6fc6d6" stroke-width=".9"/>
<rect x="482.2" y="64.4" width="4.6" height="4" fill="#7fd0e0"/><path d="M483.2 64.4v-1.2a1.3 1.3 0 0 1 2.6 0v1.2" fill="none" stroke="#7fd0e0" stroke-width=".9"/>
<circle cx="499" cy="59.4" r="2.3" fill="#8fc0ee"/>
<circle cx="431.8" cy="83" r="2.2" fill="#f6cf55"/><rect x="431" y="85" width="1.6" height="1.8" fill="#dfe2e6"/>
<path d="M446.6 86.4l4-4.2" stroke="#e6e8eb" stroke-width="1.3"/>
<circle cx="466.8" cy="83.4" r="2" fill="#f3b93a"/><path d="M466.8 80.2v6.4M463.6 83.4h6.4" stroke="#f3b93a" stroke-width=".9"/>
<rect x="482.2" y="82.6" width="4.6" height="3.8" fill="#f0b840"/><path d="M484.6 82.6v-1.4a1.3 1.3 0 0 1 2.6 0" fill="none" stroke="#f0b840" stroke-width=".9"/>
<circle cx="501.4" cy="83.6" r="2.4" fill="#f3d36a"/><path d="M500 84.8l2.8-2.4" stroke="#fff" stroke-width=".9"/>
<path d="M489.7 97.75h5.4l-2.7 3.1z" fill="#d5d9e0"/>
<path d="M588.6 37.4h8l4.4 4.4v12.4h-12.4z" fill="#8cc7f4"/><path d="M596.6 37.4v4.4h4.4z" fill="#5fa3dc"/>
<rect x="577.6" y="44.6" width="15.4" height="10.6" fill="#6d737d" stroke="#e3e5e8" stroke-width="1.1"/><circle cx="592.4" cy="55" r="4.6" fill="#7b818b" stroke="#a4a9b1" stroke-width="1.3"/>
<rect x="576.8000000000001" y="54.400000000000006" width="1.6" height="1.6" fill="#e3e5e8"/>
<path d="M587.2 78.64999999999999h3.6l-1.8 2.3z" fill="#d5d9e0"/>
<rect x="607.4" y="43.1" width="6.6" height="4.6" fill="none" stroke="#e3e5e8" stroke-width="1.1"/><circle cx="614.4" cy="47.3" r="2.2" fill="#7b818b" stroke="#c4c8cf" stroke-width=".9"/><circle cx="615" cy="41.6" r="2" fill="#f3d36a"/>
<rect x="607.4" y="61.1" width="6.6" height="4.6" fill="none" stroke="#e3e5e8" stroke-width="1.1"/><circle cx="614.4" cy="65.3" r="2.2" fill="#7b818b" stroke="#c4c8cf" stroke-width=".9"/><path d="M612.4 61.8l3.6-3.8 1.2 1.1-3.6 3.8z" fill="#f0b840"/>
<path d="M607.6 79.6l2-2.2h3.2l2 2.2-3.6 4.8z" fill="#e3e5e8"/><path d="M611.6 80.6l3.8-4 1.2 1.1-3.8 4z" fill="#f0b840"/>
<path d="M623.9 80.30000000000001h3.4l-1.7 2.2z" fill="#d5d9e0"/>
<path d="M606.9 97.75h5.4l-2.7 3.1z" fill="#d5d9e0"/>
<rect x="637.6" y="39" width="13.4" height="20" fill="#eef0f2"/><rect x="639.4" y="41" width="9.8" height="6.6" fill="#7cc0f2"/><path d="M640 51h4M640 54.4h4M645.6 51h3.4M645.6 54.4h3.4" stroke="#555" stroke-width="1"/><path d="M644.6 49.8v2.6M642 53.2v2.6" stroke="#555" stroke-width="1"/>
<path d="M648.2 57l4.6-4.8 3.8 3.4-4.6 4.8z" fill="#f0c445"/><path d="M653.6 51.6l2.6-2.8 1.8 1.6-2.6 2.8z" fill="#fff"/>
<path d="M669.6 45.5L669.60 39.50A6 6 0 0 1 674.80 42.50z" fill="#f04a3e"/>
<path d="M669.6 45.5L674.80 42.50A6 6 0 0 1 674.80 48.50z" fill="#f59a2e"/>
<path d="M669.6 45.5L674.80 48.50A6 6 0 0 1 669.60 51.50z" fill="#f2d43a"/>
<path d="M669.6 45.5L669.60 51.50A6 6 0 0 1 664.40 48.50z" fill="#5cc25a"/>
<path d="M669.6 45.5L664.40 48.50A6 6 0 0 1 664.40 42.50z" fill="#3aa6e8"/>
<path d="M669.6 45.5L664.40 42.50A6 6 0 0 1 669.60 39.50z" fill="#8a5cd6"/>
<rect x="664.4" y="58.4" width="10.6" height="1.4" fill="#e3e5e8"/><rect x="664.4" y="61.8" width="10.6" height="2.2" fill="#e3e5e8"/><rect x="664.4" y="66" width="10.6" height="3" fill="#e3e5e8"/>
<path d="M664.4 76.4h10.6M664.4 79.6h10.6M664.4 82.8h10.6M664.4 86h10.6" stroke="#c9cdd3" stroke-width="1.1" stroke-dasharray="2.2 1"/>
<path d="M770.5 44.1h5l-2.5 3z" fill="#e4e7ec"/>
<path d="M770.5 61.5h5l-2.5 3z" fill="#e4e7ec"/>
<path d="M770.5 79.1h5l-2.5 3z" fill="#e4e7ec"/>
<path d="M709.3 97.75h5.4l-2.7 3.1z" fill="#d5d9e0"/>
<path d="M771.6 97.4l3.4 3.4M775.2 98v3h-3" fill="none" stroke="#d5d9e0" stroke-width="1"/>
<rect x="787.5" y="48.2" width="21.2" height="4.8" fill="#f1c84b"/><path d="M789.5 48.2v2M791.5 48.2v1.4M793.5 48.2v2M795.5 48.2v1.4M797.5 48.2v2M799.5 48.2v1.4M801.5 48.2v2M803.5 48.2v1.4M805.5 48.2v2M807 48.2v1.4" stroke="#8a6a14" stroke-width=".6"/>
<path d="M796.2 79.14999999999999h3.6l-1.8 2.3z" fill="#d5d9e0"/>
<rect x="822.4" y="43.6" width="8" height="6.2" fill="#e9ebee"/><rect x="823.6" y="45" width="5.6" height="1.4" fill="#4d9be0"/><rect x="823.6" y="47.2" width="5.6" height="1.4" fill="#4d9be0"/><path d="M819 41l5.4 4-2.2.4 1.2 2.2-1 .5-1.2-2.2-1.6 1.4z" fill="#fff"/><path d="M824.4 39.4l1.8 1.4-1 .8 1.2.8" fill="none" stroke="#f3c64a" stroke-width="1"/>
<rect x="819.6" y="57.6" width="9" height="10" fill="#3fae6a"/><path d="M821 59.4h6M821 62h6M821 64.6h6" stroke="#bfe8cc" stroke-width=".8" stroke-dasharray="1.4 .8"/><path d="M825.4 61.6l4.8 4-2 .3 1.1 2.2-1 .5-1.1-2.2-1.5 1.3z" fill="#fff"/>
<rect x="820.4" y="75.4" width="8.4" height="11.4" fill="#dcdfe3"/><rect x="821.6" y="76.8" width="6" height="2.6" fill="#7c838d"/><path d="M821.6 81.2h6M821.6 83.2h6M821.6 85.2h6" stroke="#7c838d" stroke-width="1" stroke-dasharray="1.4 .9"/>
<path d="M824.8 97.75h5.4l-2.7 3.1z" fill="#d5d9e0"/>
<rect x="844.4" y="41.4" width="14.6" height="18.2" rx="1" fill="#e9a95a"/><rect x="848.6" y="39" width="6" height="3.6" rx="1.2" fill="#eceef0"/><path d="M850.4 44.6h8.4l4.4 4.4v13h-12.8z" fill="#e9ebee"/><path d="M858.8 44.6v4.4h4.4z" fill="#b5bac2"/>
<path d="M852.2 79.14999999999999h3.6l-1.8 2.3z" fill="#d5d9e0"/>
<rect x="874.6" y="40.4" width="7" height="8.4" fill="none" stroke="#e3e5e8" stroke-width="1.1"/><path d="M876 42.8h4M876 45h2.6" stroke="#e3e5e8" stroke-width=".9"/><path d="M880.4 44.4l4.6 5.4M884.6 44.4l-4.2 5.6" stroke="#e3e5e8" stroke-width="1"/><circle cx="880.6" cy="50.2" r="1" fill="none" stroke="#e3e5e8" stroke-width=".8"/><circle cx="884.8" cy="50.2" r="1" fill="none" stroke="#e3e5e8" stroke-width=".8"/>
<path d="M875.4 58h4.4l1.8 1.8v6h-6.2z" fill="#b9bec6"/><path d="M878.2 60.6h4.4l2 2v6.2h-6.4z" fill="#e9ebee"/>
<path d="M901.4 42h11.2v8.2h12.8v9.4h-24z" fill="#e6e4df"/>
<path d="M911.2 79.14999999999999h3.6l-1.8 2.3z" fill="#d5d9e0"/>
<path d="M916.8 97.75h5.4l-2.7 3.1z" fill="#d5d9e0"/>
<path d="M927.8 97.6l3 3M931 98v2.8h-2.8" fill="none" stroke="#d5d9e0" stroke-width="1"/>
<path d="M942 42.8h-2.6v19.4h2.6M952.4 46.8h2.6v15.4h-2.6" fill="none" stroke="#dfe2e7" stroke-width="1.2"/><rect x="944.2" y="45" width="5.6" height="5.6" fill="#3f7fc4" stroke="#7fb0e4" stroke-width=".8"/><circle cx="947" cy="56.6" r="3" fill="#7b818b" stroke="#aeb3bb" stroke-width=".9"/>
<circle cx="957.4" cy="44.6" r="2.6" fill="#f6cf55"/><path d="M957.4 39.8v9.6M952.6 44.6h9.6M954 41.2l6.8 6.8M954 48l6.8-6.8" stroke="#f6cf55" stroke-width="1"/>
<path d="M971.2 40.5h-1.6v10h1.6M977 40.5h1.6v10h-1.6" fill="none" stroke="#dfe2e7" stroke-width="1"/><circle cx="974.2" cy="43.3" r="1.6" fill="none" stroke="#aebdce" stroke-width=".9"/><circle cx="974.2" cy="47.7" r="1.6" fill="none" stroke="#aebdce" stroke-width=".9"/>
<path d="M979.6 41v9" stroke="#e04848" stroke-width="1.6"/>
<path d="M971.2 58h-1.6v10h1.6M977 58h1.6v10h-1.6" fill="none" stroke="#dfe2e7" stroke-width="1"/><circle cx="974.2" cy="60.8" r="1.6" fill="none" stroke="#aebdce" stroke-width=".9"/><circle cx="974.2" cy="65.2" r="1.6" fill="none" stroke="#aebdce" stroke-width=".9"/>
<path d="M976 67.6l4.6-5 1.6 1.4-4.6 5z" fill="#f0a840"/>
<path d="M971.2 76h-1.6v10h1.6" fill="none" stroke="#dfe2e7" stroke-width="1"/><rect x="972" y="77" width="4" height="8" rx="2" fill="#3fae6a"/><path d="M975.6 79.6l4.6 4-2 .3 1.1 2.2-1 .5-1.1-2.2-1.5 1.3z" fill="#fff"/>
<path d="M964.3 97.75h5.4l-2.7 3.1z" fill="#d5d9e0"/>
<path d="M180.8 113.6l5.6 5.6M186.4 113.6l-5.6 5.6" stroke="#e3e5e8" stroke-width="1.2"/>
<path d="M205.6 116.6h6.4M208.8 113.4v6.4" stroke="#e3e5e8" stroke-width="1.2"/>
<path d="M150.2 150.6v10.6" stroke="#8f9bb0" stroke-width="1.2" stroke-dasharray="1 1"/>
<rect x="156.6" y="151" width="3.8" height="3.8" fill="none" stroke="#a9cdf2" stroke-width="1.1"/>
<rect x="162.4" y="151" width="3.8" height="3.8" fill="none" stroke="#a9cdf2" stroke-width="1.1"/>
<rect x="156.6" y="157" width="3.8" height="3.8" fill="none" stroke="#a9cdf2" stroke-width="1.1"/>
<rect x="162.4" y="157" width="3.8" height="3.8" fill="none" stroke="#a9cdf2" stroke-width="1.1"/>
<path d="M173.6 159.6c4 .6 7.6-.8 10.6-3.2" fill="none" stroke="#dfe2e7" stroke-width="1"/><circle cx="174.4" cy="155.6" r="1.3" fill="none" stroke="#a9cdf2" stroke-width=".9"/><circle cx="178.4" cy="154.6" r="1.3" fill="none" stroke="#a9cdf2" stroke-width=".9"/><circle cx="182.8" cy="152.4" r="1.3" fill="none" stroke="#a9cdf2" stroke-width=".9"/>
<circle cx="190.6" cy="153.6" r="1.3" fill="none" stroke="#a9cdf2" stroke-width=".9"/>
<circle cx="195.2" cy="151" r="1.3" fill="none" stroke="#a9cdf2" stroke-width=".9"/>
<circle cx="198.8" cy="153.6" r="1.3" fill="none" stroke="#a9cdf2" stroke-width=".9"/>
<circle cx="191.6" cy="158.4" r="1.3" fill="none" stroke="#a9cdf2" stroke-width=".9"/>
<circle cx="195.2" cy="160.6" r="1.3" fill="none" stroke="#a9cdf2" stroke-width=".9"/>
<circle cx="198.8" cy="158" r="1.3" fill="none" stroke="#a9cdf2" stroke-width=".9"/>
<path d="M205.4 150.4l3.2 3.4M208.6 150.4l-3.2 3.4" stroke="#fff" stroke-width="1.4"/>
<circle cx="36.4" cy="281.9" r="16.4" fill="#d5d3cb"/><path d="M38.4 276.5l-5.600 5.700 5.600 5.500" fill="none" stroke="#e9e7e0" stroke-width="1.700" stroke-linejoin="round"/>
<rect x="308.1" y="253.1" width="233.1" height="173.8" fill="none" stroke="#4c4943" stroke-width="1.15"/>
<circle cx="539.9" cy="254.9" r="1.5" fill="none" stroke="#222" stroke-width="1"/>
<path d="M708.5 370.2h50M733.8 344.8v50.6" stroke="#4a4741" stroke-width="1.05"/><rect x="731.2" y="367.6" width="5.2" height="5.2" fill="#fefdf2" stroke="#3c3a36" stroke-width="1.1"/>
<circle cx="560.8" cy="454.4" r="5.7" fill="none" stroke="#fdeade" stroke-width="1.5"/><path d="M565.3 459.100l3.600 3.800" stroke="#fdeade" stroke-width="2.600" stroke-linecap="round"/><path d="M565.600 459.400l3.200 3.400" stroke="#f16b69" stroke-width=".800" stroke-linecap="round"/>
<rect x="964.6" y="134.6" width="6.4" height="6.6" fill="none" stroke="#6a6a66" stroke-width="1"/><path d="M966.4 134.4v-1.8h6.4v6.6h-1.8" fill="none" stroke="#6a6a66" stroke-width="1"/><rect x="966.4" y="136.6" width="2.4" height="2.4" fill="#6a6a66"/>
<path d="M979.6 134.4l6.6 6.8M986.2 134.4l-6.6 6.8" stroke="#6a6a66" stroke-width="1.3"/><rect x="979.4" y="133.8" width="7" height="7.8" fill="none" stroke="#6a6a66" stroke-width=".6"/>
<path d="M959.2 239.6h3.6l-1.8 2z" fill="#c4c4c8"/>
<rect x="967.9" y="264.9" width="25" height="156.2" rx="3" fill="#f8f6ed" stroke="#d0cec7" stroke-width="1"/>
<circle cx="980.4" cy="287" r="7" fill="none" stroke="#e9e7df" stroke-width="1.6"/><circle cx="980.4" cy="287" r="3" fill="none" stroke="#e9e7df" stroke-width="1"/>
<path d="M969 307.6h23" stroke="#eceae2" stroke-width="1"/><circle cx="980.4" cy="302" r=".9" fill="#e3e1d9"/>
<path d="M977 320v-6a1.4 1.4 0 0 1 2.8 0v-2a1.4 1.4 0 0 1 2.8 0v2a1.4 1.4 0 0 1 2.8 0v8c0 3-2 4.6-4.4 4.6s-4-1.6-5-4z" fill="none" stroke="#e9e7df" stroke-width="1"/>
<path d="M973.6 333l13.6 14M987.2 333l-13.6 14" stroke="#e9e7df" stroke-width="1.2"/><circle cx="985" cy="344" r="3.4" fill="none" stroke="#e9e7df" stroke-width="1"/>
<path d="M980.4 360v20M972.6 370h15.6" stroke="#e9e7df" stroke-width="3"/><path d="M980.4 358l3 4h-6zM980.4 382l3-4h-6z" fill="#e9e7df"/>
<rect x="973" y="393.6" width="14.8" height="11.6" fill="none" stroke="#e9e7df" stroke-width="1"/><rect x="973" y="389.6" width="7" height="3" fill="none" stroke="#e9e7df" stroke-width=".8"/><rect x="981" y="389.6" width="6.8" height="3" fill="none" stroke="#e9e7df" stroke-width=".8"/><path d="M978.6 397l4 2.4-4 2.4z" fill="#e9e7df"/>
<circle cx="988" cy="269" r="1.6" fill="none" stroke="#c9c8c2" stroke-width=".8"/><circle cx="986" cy="416.6" r="1.8" fill="none" stroke="#c9c8c2" stroke-width=".8"/>
<defs><radialGradient id="gb" cx="40%" cy="35%" r="70%"><stop offset="0" stop-color="#7fe08a"/><stop offset=".6" stop-color="#2db550"/><stop offset="1" stop-color="#16863a"/></radialGradient></defs>
<circle cx="998.6" cy="317.3" r="12.4" fill="#e9f3e6" opacity=".95"/><circle cx="998.6" cy="317.3" r="10.8" fill="url(#gb)"/>
<text x="991.6" y="320.4" font-size="7.6" font-weight="bold" font-style="italic" fill="#fff">74</text>
<path d="M10.600 451v36.800h36.700" fill="none" stroke="#3f3d39" stroke-width="1.100"/><rect x="7.500" y="484.100" width="7" height="7" fill="none" stroke="#3a3835" stroke-width="1.100"/>
<path d="M11.800 438.600l5 5.200 5-5.200M16.800 443.800v3.800" fill="none" stroke="#3f3d39" stroke-width="1.100"/>
<path d="M50.400 477.900l9.900 8.700M60.300 477.900l-9.900 8.700" fill="none" stroke="#3f3d39" stroke-width="1.100"/>
<path d="M842 463c-.5-4 2-6.6 5-6.6s5 2.400 4.600 6.600M852 463c-.3-4 2-6.6 5-6.600s5.200 2.400 4.800 6.600" fill="none" stroke="#eceae2" stroke-width="1.2"/>
<path d="M204 481.6v13.6M206 481.6v13.600" stroke="#b9bcc2" stroke-width="1" stroke-dasharray="1 1"/>
<path d="M211.400 485l5.600 5.800M217 485l-5.600 5.800" stroke="#eef0f2" stroke-width="1.300"/>
<path d="M227.600 493.600l6-6.200a2.600 2.600 0 0 0 3.200-3.400l-1.800 1.800-1.600-1.600 1.800-1.800a2.600 2.600 0 0 0-3.400 3.200l-6 6.200z" fill="#eef0f2"/>
<rect x="245.600" y="484" width="10" height="8.400" fill="none" stroke="#8a8d92" stroke-width="1"/><path d="M245.600 486h10" stroke="#8a8d92" stroke-width="1"/><path d="M247.400 488.400l1.600 1.200-1.600 1.200M250 491h3" fill="none" stroke="#8a8d92" stroke-width=".8"/>
<path d="M258.8 487.5h3.6l-1.8 2.2z" fill="#777"/>
<path d="M129.800 505.800h6.400M133 502.600v6.400" stroke="#c9ced6" stroke-width="1.200"/>
<path d="M275 520.600h10M275 523.600h10M275 526.600h10M277.400 518.600v10M280 518.600v10M282.600 518.600v10" stroke="#e3e5e8" stroke-width=".9"/>
<rect x="294.6" y="519.6" width="1.300" height="1.300" fill="#e3e5e8"/>
<rect x="294.6" y="522.8000000000001" width="1.300" height="1.300" fill="#e3e5e8"/>
<rect x="294.6" y="526.0" width="1.300" height="1.300" fill="#e3e5e8"/>
<rect x="297.8" y="519.6" width="1.300" height="1.300" fill="#e3e5e8"/>
<rect x="297.8" y="522.8000000000001" width="1.300" height="1.300" fill="#e3e5e8"/>
<rect x="297.8" y="526.0" width="1.300" height="1.300" fill="#e3e5e8"/>
<rect x="301.0" y="519.6" width="1.300" height="1.300" fill="#e3e5e8"/>
<rect x="301.0" y="522.8000000000001" width="1.300" height="1.300" fill="#e3e5e8"/>
<rect x="301.0" y="526.0" width="1.300" height="1.300" fill="#e3e5e8"/>
<path d="M309.9 522.3000000000001h4.2l-2.1 2.6z" fill="#e3e5e8"/>
<path d="M329 527v-9h5.400v4.200h-5.400" fill="none" stroke="#e3e5e8" stroke-width="1.100"/><rect x="324" y="524.600" width="4.600" height="4.600" fill="#e3e5e8"/>
<path d="M343 520.400h4M345 518.400v4" stroke="#fff" stroke-width="1"/><rect x="346.600" y="524" width="7" height="3" fill="#fff"/>
<path d="M361.400 518.600v9.600h9.600" fill="none" stroke="#e3e5e8" stroke-width="1.100"/><path d="M364.400 525.400h3v2.800" fill="none" stroke="#e3e5e8" stroke-width=".8"/>
<circle cx="382.600" cy="523.600" r="4.400" fill="none" stroke="#fff" stroke-width="1.100"/><path d="M382.600 523.600h6M382.600 523.600l4-4" stroke="#fff" stroke-width="1"/>
<path d="M395.4 522.3000000000001h4.2l-2.1 2.6z" fill="#e3e5e8"/>
<path d="M412 517.600v12" stroke="#e3e5e8" stroke-width="1"/><path d="M408 519.600l8 8" stroke="#e05a4a" stroke-width="1"/><path d="M416 519.600l-8 8" stroke="#6cc26a" stroke-width="1"/>
<path d="M423.9 522.3000000000001h4.2l-2.1 2.6z" fill="#e3e5e8"/>
<path d="M435.600 528h11M435.600 528l9.600-8.600" fill="none" stroke="#fff" stroke-width="1.100"/>
<rect x="454.600" y="520.400" width="8.600" height="7.600" fill="none" stroke="#fff" stroke-width="1.100"/><rect x="452.800" y="518.600" width="3" height="3" fill="#5b93d1" stroke="#fff" stroke-width=".9"/>
<path d="M470.4 522.3000000000001h4.2l-2.1 2.6z" fill="#e3e5e8"/>
<path d="M482.600 519.400h3M482.600 522.200h3M482.600 525h3M482.600 527.600h3" stroke="#e3e5e8" stroke-width="1.200"/><path d="M486.600 519.400h6" stroke="#e3e5e8" stroke-width=".8"/><path d="M486.600 522.200h6" stroke="#e3e5e8" stroke-width="1.200"/><path d="M486.600 525h6" stroke="#e3e5e8" stroke-width="1.600"/><path d="M486.600 527.600h6" stroke="#e3e5e8" stroke-width="1"/>
<rect x="501.2" y="518.4" width="2.600" height="2.600" fill="#fff"/>
<rect x="501.2" y="523.6" width="2.600" height="2.600" fill="#fff"/>
<rect x="503.8" y="521.0" width="2.600" height="2.600" fill="#fff"/>
<rect x="503.8" y="526.1999999999999" width="2.600" height="2.600" fill="#fff"/>
<rect x="506.4" y="518.4" width="2.600" height="2.600" fill="#fff"/>
<rect x="506.4" y="523.6" width="2.600" height="2.600" fill="#fff"/>
<rect x="509.0" y="521.0" width="2.600" height="2.600" fill="#fff"/>
<rect x="509.0" y="526.1999999999999" width="2.600" height="2.600" fill="#fff"/>
<rect x="521.600" y="521.400" width="7.600" height="7" fill="#5cb86a"/><path d="M519.600 518.600v6M519.600 518.600h6" stroke="#e3e5e8" stroke-width="1"/>
<path d="M539 522h7v6.600h-7zM539 522l2.600-2.600h7l-2.600 2.600M546 528.600l2.600-2.600v-6.600" fill="none" stroke="#e3e5e8" stroke-width=".9"/><rect x="537.400" y="526.400" width="3" height="3" fill="none" stroke="#e8884a" stroke-width=".9"/>
<path d="M555.4 522.3000000000001h4.2l-2.1 2.6z" fill="#e3e5e8"/>
<path d="M569.600 518.400v9.600h8.600" fill="none" stroke="#e3e5e8" stroke-width="1.100"/><path d="M567.800 520.400l1.800-2 1.800 2M576.200 526.200l2 1.800-2 1.800" fill="none" stroke="#e3e5e8" stroke-width=".9"/><path d="M573 521l2.600 2.600M575.600 521l-2.600 2.600" stroke="#e3e5e8" stroke-width=".8"/>
<path d="M586 521.600h7.600v7h-7.600zM586 521.600l2.600-2.600h7.600l-2.600 2.600M593.600 528.600l2.600-2.600v-7" fill="none" stroke="#e3e5e8" stroke-width=".9" stroke-dasharray="2 .8"/>
<path d="M603.4 522.3000000000001h4.2l-2.1 2.6z" fill="#e3e5e8"/>
<path d="M619 518.200l5 2.800v5.400l-5 2.800-5-2.800v-5.400z" fill="none" stroke="#fff" stroke-width="1"/><path d="M619 523.600v5.600M619 523.600l-5-2.600M619 523.600l5-2.600" stroke="#fff" stroke-width=".8"/>
<path d="M631.9 522.3000000000001h4.2l-2.1 2.6z" fill="#e3e5e8"/>
<path d="M650 517.400l1.700 5.800 4.400 5.400-1 .800-4.200-2.800-.900 3.200-.900-3.200-4.200 2.800-1-.800 4.400-5.400z" fill="#fff"/>
<circle cx="655" cy="519.600" r="1.400" fill="none" stroke="#fff" stroke-width=".8"/>
<path d="M667 517.400l1.700 5.800 4.400 5.400-1 .800-4.200-2.800-.900 3.200-.900-3.200-4.200 2.800-1-.800 4.400-5.400z" fill="#e3e5e8"/>
<path d="M671 518.600l1 2 2 .2-1.600 1.400" fill="none" stroke="#e3e5e8" stroke-width=".8"/>
<path d="M686 517.400l1.700 5.800 4.400 5.400-1 .800-4.200-2.800-.900 3.200-.900-3.200-4.200 2.800-1-.800 4.400-5.400z" fill="#e3e5e8"/>
<path d="M746.4 522.5h4.2l-2.1 2.6z" fill="#e3e5e8"/>
<path d="M766.01 522.61 L767.55 522.69 L767.55 524.11 L766.01 524.19 L765.52 525.39 L766.55 526.54 L765.54 527.55 L764.39 526.52 L763.19 527.01 L763.11 528.55 L761.69 528.55 L761.61 527.01 L760.41 526.52 L759.26 527.55 L758.25 526.54 L759.28 525.39 L758.79 524.19 L757.25 524.11 L757.25 522.69 L758.79 522.61 L759.28 521.41 L758.25 520.26 L759.26 519.25 L760.41 520.28 L761.61 519.79 L761.69 518.25 L763.11 518.25 L763.19 519.79 L764.39 520.28 L765.54 519.25 L766.55 520.26 L765.52 521.41z" fill="#e3e5e8"/><circle cx="762.4" cy="523.4" r="1.9" fill="#353e4d"/>
<circle cx="953.600" cy="523.400" r="5" fill="none" stroke="#e9f0fa" stroke-width="1.300"/><path d="M951 526l5.400-5.400" stroke="#e9f0fa" stroke-width="1"/>
<rect x="967" y="518.600" width="12" height="9.600" fill="none" stroke="#e3e5e8" stroke-width="1.100"/><path d="M969 523v-2.400h2.600M977 524v2.400h-2.600" fill="none" stroke="#e3e5e8" stroke-width="1"/>
<path d="M985.400 519.600h10.600M985.400 523.400h10.600M985.400 527.200h10.600" stroke="#e3e5e8" stroke-width="1.500"/>
<defs><radialGradient id="orb" cx="50%" cy="40%" r="60%"><stop offset="0" stop-color="#9fd6f6"/><stop offset=".45" stop-color="#3d8ed0"/><stop offset=".8" stop-color="#1c4f8e"/><stop offset="1" stop-color="#0f2f5c"/></radialGradient></defs>
<circle cx="19.400" cy="548.6" r="13.400" fill="#9cc4e0" opacity=".55"/><circle cx="19.400" cy="548.6" r="12.400" fill="url(#orb)"/>
<path d="M7.600 548a11.800 11.800 0 0 1 23.600 0a16 8 0 0 0-23.600 0z" fill="#d8eefa" opacity=".45"/>
<path d="M8.400 553a12.200 12.200 0 0 0 22 0a16 10 0 0 1-22 0z" fill="#4fd6f6" opacity=".7"/>
<path d="M13.400 542.600q3-1.600 6-.400l-.600 5.400q-3-1.200-6 .400z" fill="#ee6a3c"/><path d="M20.600 542.600q3 1.200 6-.200l-.600 5.400q-3 1.400-6 .200z" fill="#9ccc44"/><path d="M12.600 549.200q3-1.600 6-.400l-.600 5.400q-3-1.200-6 .400z" fill="#3f9fe6"/><path d="M19.800 549.200q3 1.200 6-.200l-.600 5.400q-3 1.400-6 .200z" fill="#f8cc38"/>
<circle cx="57.200" cy="543.800" r="6.200" fill="#231a14"/><circle cx="66.400" cy="543.600" r="6.200" fill="#231a14"/><circle cx="57" cy="553" r="6.200" fill="#231a14"/><circle cx="66.400" cy="553" r="6.200" fill="#231a14"/>
<circle cx="57.200" cy="543.800" r="5.300" fill="#84c926"/><circle cx="66.400" cy="543.600" r="5.300" fill="#4595e4"/><circle cx="57" cy="553" r="5.300" fill="#f8b31c"/><circle cx="66.400" cy="553" r="5.300" fill="#e64a3a"/>
<path d="M60.400 539.600q3.600 4.400 .400 8.600" fill="none" stroke="#231a14" stroke-width="1.600"/><path d="M70.600 547.200q-4.600 3.400-8.800 .200" fill="none" stroke="#231a14" stroke-width="1.600"/><path d="M63 557.200q-3.600-4.400-.400-8.600" fill="none" stroke="#231a14" stroke-width="1.600"/><path d="M52.800 549.400q4.600-3.400 8.800-.200" fill="none" stroke="#231a14" stroke-width="1.600"/>
<circle cx="91.400" cy="548.800" r="4.600" fill="none" stroke="#2d8af1" stroke-width="2.200"/><rect x="87" y="548" width="9.600" height="1.800" fill="#2d8af1"/><rect x="92" y="550" width="6" height="2.600" fill="#ececec"/><path d="M86 553.600q-1.600-3 2-7.600 4-4.600 8.600-5" fill="none" stroke="#2d8af1" stroke-width="1"/>
<path d="M262.95 554.29A7.3 7.3 0 1 1 264.50 550.40L250.90 550.40" fill="none" stroke="#35b0f0" stroke-width="4.400"/>
<path d="M248.200 558.400C243.500 553 249 544.400 256 540.600C261.500 537.600 266.500 538.400 267.200 541.600" fill="none" stroke="#f2c62e" stroke-width="1.900" stroke-linecap="round"/>
<path d="M288.600 541.600h8l2 2.200h12.400v14.600h-22.400z" fill="#e9c66a"/><rect x="290.400" y="545.400" width="18.600" height="4" fill="#f7f1dc"/><rect x="291.400" y="543.800" width="4" height="2" fill="#d9534a"/><rect x="297" y="543.800" width="4" height="2" fill="#5aa9e0"/><rect x="302.600" y="543.800" width="4" height="2" fill="#6cc26a"/><path d="M288.600 549.600h22.400v8.800h-22.400z" fill="#f3d98a"/><rect x="293.600" y="551.600" width="12.400" height="4.600" rx="1" fill="#5aa9e0"/><rect x="295" y="556" width="9.600" height="2" fill="#9fd0f0"/>
<circle cx="347" cy="549" r="11" fill="#f9cf1c"/><path d="M342.600 553.600a2.800 2.800 0 1 0 5.600 0v-10l4.600-1.800v2.800l-3 1.200" fill="none" stroke="#27b96c" stroke-width="2.400"/><circle cx="345.400" cy="553.600" r="2.800" fill="#27b96c"/>
<path d="M381.600 541.600q0-3.400 3-1.800l16.400 7.600q2.800 1.600 0 3.200l-16.400 7.600q-3 1.600-3-1.800z" fill="#2d9df4"/>
<path d="M381.600 542.400q0-3 2.600-1.800l10 5-1 8.400-9 4.400q-2.600 1.200-2.600-1.800z" fill="#fb9a14"/>
<path d="M384.400 543.400q0-2.200 2-1.200l11.600 5.800q1.400 1 0 2l-11.600 5.800q-2 1-2-1.200z" fill="#4cc832"/>
<path d="M387.600 545.400l6.800 3.600-6.800 3.600z" fill="#fff"/>
<path d="M437.600 549Q435.35 545.11 435.76 538.56A10.6 10.6 0 0 1 446.07 542.62Q438.94 543.15 437.600 549z" fill="#b44cf0"/>
<path d="M437.600 549Q438.76 544.65 443.68 540.32A10.6 10.6 0 0 1 448.10 550.48Q442.68 545.81 437.600 549z" fill="#f0408c"/>
<path d="M437.600 549Q441.49 546.75 448.04 547.16A10.6 10.6 0 0 1 443.98 557.47Q443.45 550.34 437.600 549z" fill="#f4502e"/>
<path d="M437.600 549Q441.95 550.16 446.28 555.08A10.6 10.6 0 0 1 436.12 559.50Q440.79 554.08 437.600 549z" fill="#f8a020"/>
<path d="M437.600 549Q439.85 552.89 439.44 559.44A10.6 10.6 0 0 1 429.13 555.38Q436.26 554.85 437.600 549z" fill="#f4d830"/>
<path d="M437.600 549Q436.44 553.35 431.52 557.68A10.6 10.6 0 0 1 427.10 547.52Q432.52 552.19 437.600 549z" fill="#58c83c"/>
<path d="M437.600 549Q433.71 551.25 427.16 550.84A10.6 10.6 0 0 1 431.22 540.53Q431.75 547.66 437.600 549z" fill="#30b8e8"/>
<path d="M437.600 549Q433.25 547.84 428.92 542.92A10.6 10.6 0 0 1 439.08 538.50Q434.41 543.92 437.600 549z" fill="#4870f0"/>
<circle cx="437.600" cy="549" r="2.200" fill="#fff"/>
<circle cx="528.200" cy="548.200" r="10.400" fill="#e8453c"/><path d="M528.200 548.200L519.200 553.400A10.400 10.400 0 0 0 528.200 558.600L533.400 549.600z" fill="#2fa455"/><path d="M528.200 548.200l5.200 1.400L528.200 558.600A10.400 10.400 0 0 0 537.200 543H528.200z" fill="#f7c52e"/><circle cx="528.200" cy="548.200" r="4.800" fill="#f4f4f4"/><circle cx="528.200" cy="548.200" r="3.700" fill="#4a8af4"/>
<circle cx="573" cy="548.200" r="10.600" fill="#fff"/><path d="M566.600 556.400q-1.600-3.600 2.400-6.400 1.600-1.200 2.400-2.600 1.600-2.200 3.400 0 .800 1.400 2.400 2.600 4 2.800 2.400 6.400-.800 1.600-3.200 1.400-3.400-.500-6.600 0-2.400.200-3.200-1.400z" fill="#2a5fd6"/><ellipse cx="566" cy="547" rx="1.800" ry="2.500" fill="#2a5fd6"/><ellipse cx="570.200" cy="542.600" rx="1.800" ry="2.600" fill="#2a5fd6"/><ellipse cx="575.800" cy="542.600" rx="1.800" ry="2.600" fill="#2a5fd6"/><ellipse cx="580" cy="547" rx="1.800" ry="2.500" fill="#2a5fd6"/>
<text x="573" y="556.400" font-size="7" font-weight="bold" fill="#fff" text-anchor="middle">du</text>
<ellipse cx="614" cy="545" rx="8.200" ry="6.800" fill="#6ccb3c"/><path d="M609 550.400l-1.800 3.800 4.600-2.200z" fill="#6ccb3c"/><ellipse cx="623.800" cy="551.400" rx="7" ry="5.800" fill="#f2f2f0"/><path d="M627.600 556.200l1.600 2.800-3.800-1.600z" fill="#f2f2f0"/><circle cx="621.400" cy="550" r="1" fill="#8a8a88"/><circle cx="626.400" cy="550" r="1" fill="#8a8a88"/><circle cx="611" cy="543.200" r="1.100" fill="#3c7a1c"/><circle cx="616.800" cy="543.200" r="1.100" fill="#3c7a1c"/>
<path d="M782.600 493C781.400 495 781.200 497 781.200 500V512C781.200 519 786 523.400 791.500 522.600C794 522.200 796 521 798 519.800L809.500 512.400C814.500 509 814.500 502.400 809.500 499.200L797 491.400C792 488.400 787.500 490.600 787.500 495.600V512.600C787.500 516.400 790.400 517.200 792.200 515.600" fill="none" stroke="#cdd1dc" stroke-width="2.700" stroke-linecap="round" stroke-linejoin="round"/>
<path d="M793.200 502l6.400 3.500-6.400 3.500z" fill="#cdd1dc"/><rect x="801.400" y="502.400" width="1.500" height="6.600" fill="#cdd1dc"/>
</svg>
</div>
</body></html>
